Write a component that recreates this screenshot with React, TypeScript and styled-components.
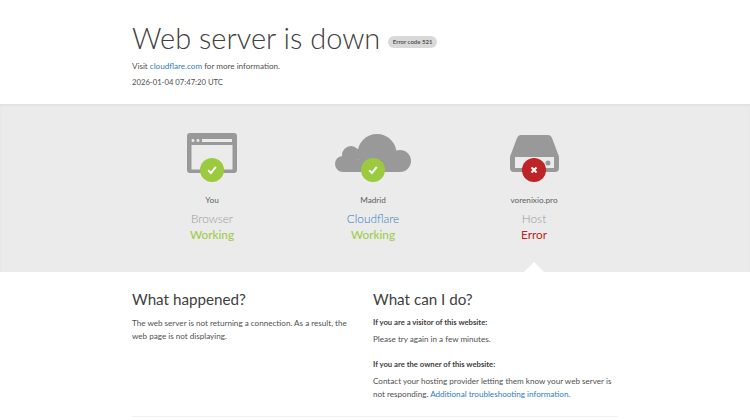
import styled, { createGlobalStyle } from 'styled-components';

const GlobalStyle = createGlobalStyle`
  html, body {
    margin: 0;
    padding: 0;
    background: #fff;
    overflow: hidden;
  }
  body {
    font-family: Lato, "Open Sans", "Liberation Sans", sans-serif;
    color: #404040;
  }
`;

const Page = styled.div`
  width: 750px;
  height: 420px;
  overflow: hidden;
`;

const Wrapper = styled.div`
  width: 486px;
  margin: 0 auto;
`;

const Header = styled.header`
  height: 104px;
  box-sizing: border-box;
  padding-top: 19px;
`;

const TitleRow = styled.div`
  display: flex;
  align-items: center;
  gap: 8px;
  height: 38px;
  margin-bottom: 1px;
`;

const Title = styled.h1`
  margin: 0;
  font-size: 29px;
  line-height: 38px;
  font-weight: 300;
  color: #404040;
  white-space: nowrap;
`;

const ErrorBadge = styled.span`
  margin-top: 8px;
  font-size: 6px;
  font-weight: 700;
  line-height: 12px;
  height: 12px;
  padding: 0 4.5px;
  border-radius: 6px;
  background: #d9d9d9;
  color: #555;
  white-space: nowrap;
`;

const HeaderLine = styled.p<{ $small?: boolean }>`
  margin: 0;
  font-size: ${({ $small }) => ($small ? '7.7px' : '8.1px')};
  line-height: 16px;
  color: #505050;
`;

const Link = styled.a`
  color: #2f7bbf;
  text-decoration: none;
`;

const Status = styled.section`
  position: relative;
  height: 168px;
  background: #ebebeb;
  box-shadow: inset 0 2px 3px -1px #dcdcdc;
  &::after {
    content: '';
    position: absolute;
    left: 523.5px;
    bottom: 0;
    border-left: 10px solid transparent;
    border-right: 10px solid transparent;
    border-bottom: 10px solid #fff;
  }
`;

const StatusGrid = styled.div`
  display: grid;
  grid-template-columns: repeat(3, 161px);
  margin-left: -0.5px;
  padding-top: 29px;
`;

const Cell = styled.div`
  display: flex;
  flex-direction: column;
  align-items: center;
`;

const IconBox = styled.div`
  position: relative;
  width: 80px;
  height: 48px;
  display: flex;
  justify-content: center;
  svg { display: block; }
`;

const StateDot = styled.span<{ $error?: boolean }>`
  position: absolute;
  left: 50%;
  top: 25px;
  width: 24px;
  height: 24px;
  margin-left: -12px;
  border-radius: 50%;
  background: ${({ $error }) => ($error ? '#bd2426' : '#9bca3e')};
  display: flex;
  align-items: center;
  justify-content: center;
`;

const Place = styled.div`
  margin-top: 12px;
  font-size: 8.2px;
  line-height: 14px;
  color: #606060;
`;

const Kind = styled.div<{ $link?: boolean }>`
  margin-top: 4px;
  font-size: 11.8px;
  line-height: 16px;
  font-weight: 300;
  color: ${({ $link }) => ($link ? '#2f7bbf' : '#999')};
`;

const StateText = styled.div<{ $error?: boolean }>`
  font-size: 11.8px;
  line-height: 16px;
  color: ${({ $error }) => ($error ? '#bd2426' : '#9bca3e')};
`;

const Details = styled.section`
  padding-top: 15px;
`;

const Columns = styled.div`
  display: grid;
  grid-template-columns: 241px 245px;
  height: 129px;
  border-bottom: 1px solid #efefef;
`;

const LeftColumn = styled.div`
  padding-right: 15px;
`;

const Heading = styled.h2<{ $gap: number }>`
  margin: 0 0 ${({ $gap }) => $gap}px;
  font-size: 15.2px;
  line-height: 24px;
  font-weight: 400;
  color: #404040;
`;

const Body = styled.p`
  margin: 0;
  font-size: 8.1px;
  line-height: 13px;
  color: #505050;
`;

const Question = styled.h3`
  margin: 0 0 5px;
  font-size: 7.7px;
  line-height: 12px;
  font-weight: 700;
  color: #404040;
`;

const AnswerBlock = styled.div`
  margin-bottom: 12px;
`;

const Check = () => (
  <svg width="14" height="14" viewBox="0 0 14 14" fill="none">
    <path d="M3.200 7.300 5.900 10.100 10.800 3.900" stroke="#fff" strokeWidth="2" />
  </svg>
);

const Cross = () => (
  <svg width="10" height="10" viewBox="0 0 10 10" fill="none">
    <path d="M2.500 2.500 7.500 7.500M7.500 2.500 2.500 7.500" stroke="#fff" strokeWidth="1.9" />
  </svg>
);

const BrowserIcon = () => (
  <svg width="50" height="40" viewBox="0 0 50 40">
    <path
      fill="#999"
      fillRule="evenodd"
      d="M3 0h44a3 3 0 0 1 3 3v34a3 3 0 0 1-3 3H3a3 3 0 0 1-3-3V3a3 3 0 0 1 3-3zM4.500 12v24.500h41V12zM6 6a1.500 1.500 0 1 0 .01 0zM11 6a1.500 1.500 0 1 0 .01 0zM15 6v3h30V6z"
    />
  </svg>
);

const CloudIcon = () => (
  <svg width="76" height="40" viewBox="0 -1 76 40" fill="#999">
    <circle cx="8" cy="30" r="8" />
    <circle cx="16" cy="21" r="9" />
    <circle cx="42" cy="19.500" r="19.500" />
    <circle cx="65" cy="27" r="11" />
    <rect x="8" y="26" width="57" height="12" />
  </svg>
);

const ServerIcon = () => (
  <svg width="49" height="39" viewBox="0 -2 49 39">
    <path
      fill="#999"
      fillRule="evenodd"
      d="M11 0h27c2 0 3 1 4 3l6 16c1 2 1 3 1 5v9a4 4 0 0 1-4 4H4a4 4 0 0 1-4-4v-9c0-2 0-3 1-5L7 3c1-2 2-3 4-3zM5 22v11h39V22zM35.500 28a2.500 2.500 0 1 0 5 0 2.500 2.500 0 1 0-5 0z"
    />
  </svg>
);

export default function App() {
  return (
    <Page>
      <GlobalStyle />
      <Header>
        <Wrapper>
          <TitleRow>
            <Title>Web server is down</Title>
            <ErrorBadge>Error code 521</ErrorBadge>
          </TitleRow>
          <HeaderLine>
            Visit <Link href="#">cloudflare.com</Link> for more information.
          </HeaderLine>
          <HeaderLine $small>2026-01-04 07:47:20 UTC</HeaderLine>
        </Wrapper>
      </Header>

      <Status>
        <Wrapper>
          <StatusGrid>
            <Cell>
              <IconBox>
                <BrowserIcon />
                <StateDot><Check /></StateDot>
              </IconBox>
              <Place>You</Place>
              <Kind>Browser</Kind>
              <StateText>Working</StateText>
            </Cell>
            <Cell>
              <IconBox>
                <CloudIcon />
                <StateDot><Check /></StateDot>
              </IconBox>
              <Place>Madrid</Place>
              <Kind $link>Cloudflare</Kind>
              <StateText>Working</StateText>
            </Cell>
            <Cell>
              <IconBox>
                <ServerIcon />
                <StateDot $error><Cross /></StateDot>
              </IconBox>
              <Place>vorenixio.pro</Place>
              <Kind>Host</Kind>
              <StateText $error>Error</StateText>
            </Cell>
          </StatusGrid>
        </Wrapper>
      </Status>

      <Details>
        <Wrapper>
          <Columns>
            <LeftColumn>
              <Heading $gap={6}>What happened?</Heading>
              <Body>
                The web server is not returning a connection. As a result, the web page is not displaying.
              </Body>
            </LeftColumn>
            <div>
              <Heading $gap={5}>What can I do?</Heading>
              <AnswerBlock>
                <Question>If you are a visitor of this website:</Question>
                <Body>Please try again in a few minutes.</Body>
              </AnswerBlock>
              <Question>If you are the owner of this website:</Question>
              <Body>
                Contact your hosting provider letting them know your web server is not responding.{' '}
                <Link href="#">Additional troubleshooting information.</Link>
              </Body>
            </div>
          </Columns>
        </Wrapper>
      </Details>
    </Page>
  );
}
